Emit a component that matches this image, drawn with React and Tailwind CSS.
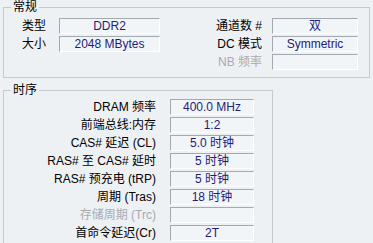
const font = {
  fontFamily: '"Liberation Sans", "Noto Sans CJK SC", sans-serif',
};

function Field({ value, className = "" }) {
  return (
    <div
      className={`h-[16px] flex items-center justify-center bg-[#f2f5f8] border border-t-[#a3a9b0] border-l-[#a3a9b0] border-r-white border-b-white text-[#241c78] leading-[14px] ${className}`}
    >
      {value}
    </div>
  );
}

function Group({ title, className = "", children }) {
  return (
    <div className={`relative border border-[#c3cad2] ${className}`}>
      <div className="absolute top-[-9px] left-[7px] px-[2px] bg-[#eef1f4] text-black leading-[16px]">
        {title}
      </div>
      {children}
    </div>
  );
}

const timings = [
  ["DRAM 频率", "400.0 MHz"],
  ["前端总线:内存", "1:2"],
  ["CAS# 延迟 (CL)", "5.0 时钟"],
  ["RAS# 至 CAS# 延时", "5 时钟"],
  ["RAS# 预充电 (tRP)", "5 时钟"],
  ["周期 (Tras)", "18 时钟"],
  ["存储周期 (Trc)", "", true],
  ["首命令延迟(Cr)", "2T"],
];

export default function App() {
  return (
    <div
      className="w-[373px] h-[243px] overflow-hidden bg-[#eef1f4] pt-[7px] px-[3px] text-[12px]"
      style={font}
    >
      {/* 常规 */}
      <Group title="常规" className="h-[71px] w-[367px]">
        <div className="flex pt-[10px] pl-[18px]">
          <div className="flex flex-col gap-[2px] w-[138px]">
            <div className="flex items-center h-[16px]">
              <span className="w-[37px] leading-[16px]">类型</span>
              <Field value="DDR2" className="w-[101px]" />
            </div>
            <div className="flex items-center h-[16px]">
              <span className="w-[37px] leading-[16px]">大小</span>
              <Field value="2048 MBytes" className="w-[101px]" />
            </div>
          </div>
          <div className="flex flex-col gap-[2px] ml-[20px]">
            <div className="flex items-center h-[16px]">
              <span className="w-[82px] text-right leading-[16px]">通道数 #</span>
              <Field value="双" className="w-[86px] ml-[10px]" />
            </div>
            <div className="flex items-center h-[16px]">
              <span className="w-[82px] text-right leading-[16px]">DC 模式</span>
              <Field value="Symmetric" className="w-[86px] ml-[10px]" />
            </div>
            <div className="flex items-center h-[16px]">
              <span className="w-[82px] text-right leading-[16px] text-[#a6abb1]">NB 频率</span>
              <Field value="" className="w-[86px] ml-[10px]" />
            </div>
          </div>
        </div>
      </Group>

      {/* 时序 */}
      <Group title="时序" className="mt-[12px] w-[270px] h-[180px]">
        <div className="flex flex-col gap-[2px] pt-[8px]">
          {timings.map(([label, value, dim]) => (
            <div key={label} className="flex items-center h-[16px]">
              <span
                className={`w-[152px] text-right leading-[16px] ${dim ? "text-[#a6abb1]" : "text-black"}`}
              >
                {label}
              </span>
              <Field value={value} className="w-[84px] ml-[14px]" />
            </div>
          ))}
        </div>
      </Group>
    </div>
  );
}
